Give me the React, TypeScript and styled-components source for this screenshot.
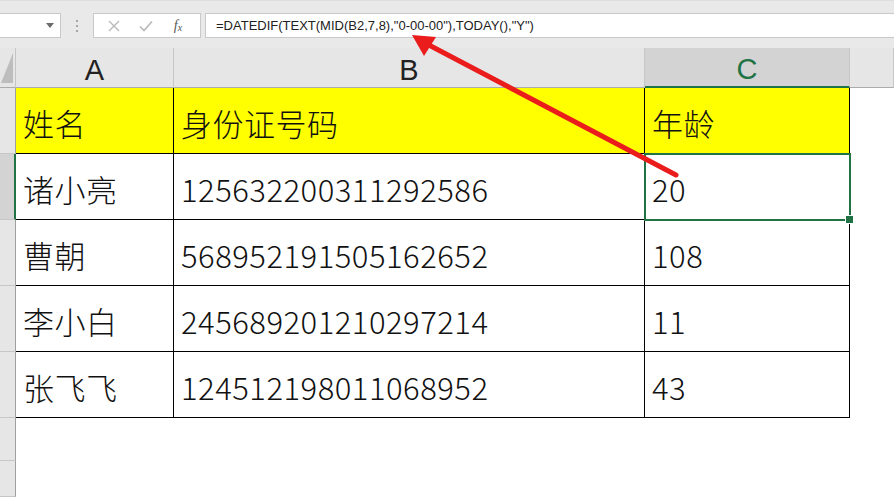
import React from "react";
import styled, { createGlobalStyle } from "styled-components";

const GREEN = "#217346";

const GlobalStyle = createGlobalStyle`
  html, body {
    margin: 0;
    padding: 0;
    background: #fff;
    overflow: hidden;
  }
  * {
    box-sizing: border-box;
  }
`;

const columns = ["A", "B", "C", ""];

const rows = [
  ["姓名", "身份证号码", "年龄"],
  ["诸小亮", "125632200311292586", "20"],
  ["曹朝", "568952191505162652", "108"],
  ["李小白", "245689201210297214", "11"],
  ["张飞飞", "124512198011068952", "43"],
];

const selectedCol = 2;
const selectedRow = 1;

const App = () => {
  return (
    <Page>
      <GlobalStyle />
      <Toolbar>
        <NameBox>
          <DropArrow />
        </NameBox>
        <Grip>
          <span />
          <span />
          <span />
        </Grip>
        <ButtonBox>
          <ToolIcon>
            <svg width="12" height="12" viewBox="0 0 12 12">
              <path d="M1 1 L11 11 M11 1 L1 11" stroke="#b9b9b9" strokeWidth="1.4" fill="none" />
            </svg>
          </ToolIcon>
          <ToolIcon>
            <svg width="14" height="12" viewBox="0 0 14 12">
              <path d="M1 6.5 L5 10.5 L13 1.5" stroke="#b9b9b9" strokeWidth="1.6" fill="none" />
            </svg>
          </ToolIcon>
          <FxIcon>
            f<sub>x</sub>
          </FxIcon>
        </ButtonBox>
        <FormulaBox>=DATEDIF(TEXT(MID(B2,7,8),"0-00-00"),TODAY(),"Y")</FormulaBox>
      </Toolbar>

      <Sheet>
        <Corner>
          <svg width="12" height="30" viewBox="0 0 12 30">
            <polygon points="12,0 12,30 0,30" fill="#bdbdbd" />
          </svg>
        </Corner>
        {columns.map((col, i) => (
          <ColHeader key={col + i} $active={i === selectedCol}>
            {col}
          </ColHeader>
        ))}

        {rows.map((row, r) => (
          <React.Fragment key={r}>
            <RowHeader $active={r === selectedRow} />
            {row.map((value, c) => (
              <Cell
                key={c}
                $heading={r === 0}
                $selected={r === selectedRow && c === selectedCol}
              >
                {value}
              </Cell>
            ))}
            <Blank />
          </React.Fragment>
        ))}

        {[0, 1].map((r) => (
          <React.Fragment key={"empty" + r}>
            <RowHeader />
            <Blank />
            <Blank />
            <Blank />
            <Blank />
          </React.Fragment>
        ))}
      </Sheet>

      <Overlay width="894" height="497" viewBox="0 0 894 497">
        <line x1="676" y1="175" x2="427" y2="44" stroke="#ea1c1c" strokeWidth="5" strokeLinecap="round" />
        <polygon points="412,35 436,37 424,56" fill="#ea1c1c" />
      </Overlay>
    </Page>
  );
};

const Page = styled.div`
  position: relative;
  width: 100vw;
  height: 100vh;
  display: flex;
  flex-direction: column;
  background: #fff;
`;

const Toolbar = styled.div`
  height: 48px;
  padding: 12px 0 10px;
  background: #e9e9e9;
  display: flex;
  align-items: stretch;
  border-top: 1px solid #dedede;
`;

const NameBox = styled.div`
  width: 61px;
  background: #fff;
  border: 1px solid #c9c9c9;
  border-left: none;
  display: flex;
  align-items: center;
  justify-content: flex-end;
  padding-right: 6px;
`;

const DropArrow = styled.span`
  width: 0;
  height: 0;
  border-left: 4px solid transparent;
  border-right: 4px solid transparent;
  border-top: 5px solid #6b6b6b;
`;

const Grip = styled.div`
  width: 32px;
  display: flex;
  flex-direction: column;
  align-items: center;
  justify-content: center;
  gap: 3px;

  span {
    width: 2px;
    height: 2px;
    background: #a6a6a6;
  }
`;

const ButtonBox = styled.div`
  width: 108px;
  background: #fff;
  border: 1px solid #c9c9c9;
  display: flex;
  align-items: center;
  justify-content: space-around;
  padding: 0 6px 0 4px;
`;

const ToolIcon = styled.span`
  display: flex;
  align-items: center;
  justify-content: center;
  width: 24px;
`;

const FxIcon = styled.span`
  font-family: "Liberation Serif", serif;
  font-style: italic;
  font-size: 14px;
  color: #555;
  width: 24px;
  text-align: center;

  sub {
    font-size: 10px;
    vertical-align: -1px;
  }
`;

const FormulaBox = styled.div`
  flex: 1;
  margin-left: 4px;
  background: #fff;
  border: 1px solid #c9c9c9;
  border-right: none;
  display: flex;
  align-items: center;
  padding-left: 10px;
  font-family: "Liberation Sans", Arial, sans-serif;
  font-size: 13px;
  color: #222;
  white-space: nowrap;
`;

const Sheet = styled.div`
  flex: 1;
  display: grid;
  grid-template-columns: 16px 158px 471px 205px 1fr;
  grid-template-rows: 40px repeat(5, 66px) 43px 1fr;
`;

const Corner = styled.div`
  background: #e6e6e6;
  border-right: 1px solid #c6c6c6;
  border-bottom: 1px solid #ababab;
  display: flex;
  align-items: flex-end;
  justify-content: flex-end;
  padding: 0 2px 4px 0;
`;

const ColHeader = styled.div<{ $active?: boolean }>`
  background: ${(p) => (p.$active ? "#d3d3d3" : "#e6e6e6")};
  color: ${(p) => (p.$active ? GREEN : "#222")};
  border-right: 1px solid #c6c6c6;
  border-bottom: ${(p) => (p.$active ? `2px solid ${GREEN}` : "1px solid #ababab")};
  display: flex;
  align-items: center;
  justify-content: center;
  padding-top: 5px;
  font-family: "Liberation Sans", Arial, sans-serif;
  font-size: 29px;
`;

const RowHeader = styled.div<{ $active?: boolean }>`
  background: ${(p) => (p.$active ? "#d3d3d3" : "#e6e6e6")};
  border-bottom: 1px solid #c6c6c6;
  border-right: ${(p) => (p.$active ? `2px solid ${GREEN}` : "1px solid #9f9f9f")};
`;

const Cell = styled.div<{ $heading?: boolean; $selected?: boolean }>`
  position: relative;
  background: ${(p) => (p.$heading ? "#ffff00" : "#fff")};
  border-right: 1px solid #000;
  border-bottom: 1px solid #000;
  display: flex;
  align-items: center;
  padding: 3px 0 0 7px;
  font-family: "Noto Sans CJK SC", "Noto Sans", sans-serif;
  font-size: 31px;
  font-weight: 300;
  letter-spacing: 0.5px;
  line-height: 1;
  color: #111;
  white-space: nowrap;
  outline: ${(p) => (p.$selected ? `2px solid ${GREEN}` : "none")};
  outline-offset: -1px;
  z-index: ${(p) => (p.$selected ? 1 : 0)};

  &::after {
    content: "";
    display: ${(p) => (p.$selected ? "block" : "none")};
    position: absolute;
    right: -5px;
    bottom: -5px;
    width: 7px;
    height: 7px;
    background: ${GREEN};
    border: 1px solid #fff;
  }
`;

const Blank = styled.div`
  background: #fff;
`;

const Overlay = styled.svg`
  position: absolute;
  inset: 0;
  pointer-events: none;
  z-index: 5;
`;

export default App;
